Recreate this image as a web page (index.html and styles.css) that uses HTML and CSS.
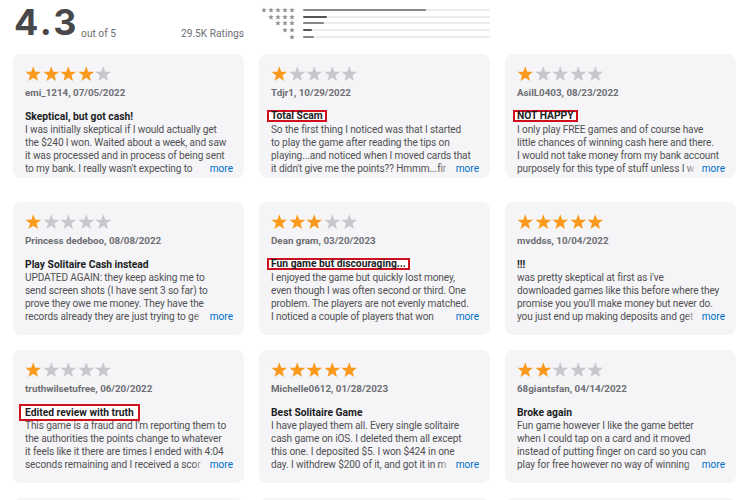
FILE: index.html
```html
<!DOCTYPE html>
<html>
<head>
  <meta charset="utf-8">
  <title>Ratings and Reviews</title>
  <link rel="stylesheet" href="styles.css">
</head>
<body>
  <svg class="defs" aria-hidden="true">
    <symbol id="star" viewBox="0 0 20 19">
      <polygon points="10,0 12.41,6.68 19.51,6.91 13.9,11.27 15.88,18.09 10,14.1 4.12,18.09 6.1,11.27 0.49,6.91 7.59,6.68"/>
    </symbol>
  </svg>

  <header class="summary">
    <div class="score">
      <span class="big">4.3</span>
      <span class="outof">out of 5</span>
      <span class="count">29.5K Ratings</span>
    </div>
    <div class="histogram">
      <div class="hrow"><span class="hstars"><svg><use href="#star"/></svg><svg><use href="#star"/></svg><svg><use href="#star"/></svg><svg><use href="#star"/></svg><svg><use href="#star"/></svg></span><span class="track"><span class="fill" style="width:66%"></span></span></div>
      <div class="hrow"><span class="hstars"><svg><use href="#star"/></svg><svg><use href="#star"/></svg><svg><use href="#star"/></svg><svg><use href="#star"/></svg></span><span class="track"><span class="fill dark" style="width:13%"></span></span></div>
      <div class="hrow"><span class="hstars"><svg><use href="#star"/></svg><svg><use href="#star"/></svg><svg><use href="#star"/></svg></span><span class="track"><span class="fill" style="width:11%"></span></span></div>
      <div class="hrow"><span class="hstars"><svg><use href="#star"/></svg><svg><use href="#star"/></svg></span><span class="track"><span class="fill dark" style="width:5%"></span></span></div>
      <div class="hrow"><span class="hstars"><svg><use href="#star"/></svg></span><span class="track"><span class="fill" style="width:6%"></span></span></div>
    </div>
  </header>

  <main class="reviews">
    <article class="card">
      <div class="stars"><svg class="on"><use href="#star"/></svg><svg class="on"><use href="#star"/></svg><svg class="on"><use href="#star"/></svg><svg class="on"><use href="#star"/></svg><svg><use href="#star"/></svg></div>
      <div class="who">emi_1214, 07/05/2022</div>
      <h3 class="title"><span>Skeptical, but got cash!</span></h3>
      <div class="body">
        <div class="line">I was initially skeptical if I would actually get</div>
        <div class="line">the $240 I won. Waited about a week, and saw</div>
        <div class="line">it was processed and in process of being sent</div>
        <div class="line last"><span class="clip">to my bank. I really wasn't expecting to</span><a class="more">more</a></div>
      </div>
    </article>

    <article class="card">
      <div class="stars"><svg class="on"><use href="#star"/></svg><svg><use href="#star"/></svg><svg><use href="#star"/></svg><svg><use href="#star"/></svg><svg><use href="#star"/></svg></div>
      <div class="who">Tdjr1, 10/29/2022</div>
      <h3 class="title"><span class="marked">Total Scam</span></h3>
      <div class="body">
        <div class="line">So the first thing I noticed was that I started</div>
        <div class="line">to play the game after reading the tips on</div>
        <div class="line">playing...and noticed when I moved cards that</div>
        <div class="line last"><span class="clip">it didn't give me the points?? Hmmm...fir</span><a class="more">more</a></div>
      </div>
    </article>

    <article class="card">
      <div class="stars"><svg class="on"><use href="#star"/></svg><svg><use href="#star"/></svg><svg><use href="#star"/></svg><svg><use href="#star"/></svg><svg><use href="#star"/></svg></div>
      <div class="who">AsilL0403, 08/23/2022</div>
      <h3 class="title"><span class="marked">NOT HAPPY</span></h3>
      <div class="body">
        <div class="line">I only play FREE games and of course have</div>
        <div class="line">little chances of winning cash here and there.</div>
        <div class="line">I would not take money from my bank account</div>
        <div class="line last"><span class="clip">purposely for this type of stuff unless I w</span><a class="more">more</a></div>
      </div>
    </article>

    <article class="card">
      <div class="stars"><svg class="on"><use href="#star"/></svg><svg><use href="#star"/></svg><svg><use href="#star"/></svg><svg><use href="#star"/></svg><svg><use href="#star"/></svg></div>
      <div class="who">Princess dedeboo, 08/08/2022</div>
      <h3 class="title"><span>Play Solitaire Cash instead</span></h3>
      <div class="body">
        <div class="line">UPDATED AGAIN: they keep asking me to</div>
        <div class="line">send screen shots (I have sent 3 so far) to</div>
        <div class="line">prove they owe me money. They have the</div>
        <div class="line last"><span class="clip">records already they are just trying to ge</span><a class="more">more</a></div>
      </div>
    </article>

    <article class="card">
      <div class="stars"><svg class="on"><use href="#star"/></svg><svg class="on"><use href="#star"/></svg><svg class="on"><use href="#star"/></svg><svg><use href="#star"/></svg><svg><use href="#star"/></svg></div>
      <div class="who">Dean gram, 03/20/2023</div>
      <h3 class="title"><span class="marked">Fun game but discouraging...</span></h3>
      <div class="body">
        <div class="line">I enjoyed the game but quickly lost money,</div>
        <div class="line">even though I was often second or third. One</div>
        <div class="line">problem. The players are not evenly matched.</div>
        <div class="line last"><span class="clip">I noticed a couple of players that won</span><a class="more">more</a></div>
      </div>
    </article>

    <article class="card">
      <div class="stars"><svg class="on"><use href="#star"/></svg><svg class="on"><use href="#star"/></svg><svg class="on"><use href="#star"/></svg><svg class="on"><use href="#star"/></svg><svg class="on"><use href="#star"/></svg></div>
      <div class="who">mvddss, 10/04/2022</div>
      <h3 class="title"><span>!!!</span></h3>
      <div class="body">
        <div class="line">was pretty skeptical at first as i've</div>
        <div class="line">downloaded games like this before where they</div>
        <div class="line">promise you you'll make money but never do.</div>
        <div class="line last"><span class="clip">you just end up making deposits and get</span><a class="more">more</a></div>
      </div>
    </article>

    <article class="card">
      <div class="stars"><svg class="on"><use href="#star"/></svg><svg><use href="#star"/></svg><svg><use href="#star"/></svg><svg><use href="#star"/></svg><svg><use href="#star"/></svg></div>
      <div class="who">truthwilsetufree, 06/20/2022</div>
      <h3 class="title"><span class="marked tall">Edited review with truth</span></h3>
      <div class="body">
        <div class="line">This game is a fraud and I'm reporting them to</div>
        <div class="line">the authorities the points change to whatever</div>
        <div class="line">it feels like it there are times I ended with 4:04</div>
        <div class="line last"><span class="clip">seconds remaining and I received a scor</span><a class="more">more</a></div>
      </div>
    </article>

    <article class="card">
      <div class="stars"><svg class="on"><use href="#star"/></svg><svg class="on"><use href="#star"/></svg><svg class="on"><use href="#star"/></svg><svg class="on"><use href="#star"/></svg><svg class="on"><use href="#star"/></svg></div>
      <div class="who">Michelle0612, 01/28/2023</div>
      <h3 class="title"><span>Best Solitaire Game</span></h3>
      <div class="body">
        <div class="line">I have played them all. Every single solitaire</div>
        <div class="line">cash game on iOS. I deleted them all except</div>
        <div class="line">this one. I deposited $5. I won $424 in one</div>
        <div class="line last"><span class="clip">day. I withdrew $200 of it, and got it in m</span><a class="more">more</a></div>
      </div>
    </article>

    <article class="card">
      <div class="stars"><svg class="on"><use href="#star"/></svg><svg class="on"><use href="#star"/></svg><svg><use href="#star"/></svg><svg><use href="#star"/></svg><svg><use href="#star"/></svg></div>
      <div class="who">68giantsfan, 04/14/2022</div>
      <h3 class="title"><span>Broke again</span></h3>
      <div class="body">
        <div class="line">Fun game however I like the game better</div>
        <div class="line">when I could tap on a card and it moved</div>
        <div class="line">instead of putting finger on card so you can</div>
        <div class="line last"><span class="clip">play for free however no way of winning</span><a class="more">more</a></div>
      </div>
    </article>

    <article class="card"></article>
    <article class="card"></article>
    <article class="card"></article>
  </main>
</body>
</html>
```

FILE: styles.css
```css
html, body { margin:0; background:#fff; }
body
{
  height:500px;
  overflow:hidden;
  font-family:Roboto, "Liberation Sans", sans-serif;
  color:#4a4a4d;
}
.defs { display:none; }

/* rating summary */
.summary
{
  display:grid;
  grid-template-columns:repeat(3, 231px);
  column-gap:15px;
  height:54px;
  padding:0 13px;
}
.score { display:flex; align-items:flex-end; height:38px; padding-top:2px; }
.score .big
{
  font-family:Inter, Roboto, sans-serif;
  font-size:36px;
  line-height:36px;
  font-weight:700;
  letter-spacing:2.5px;
  color:#48484a;
  margin-left:1px;
}
.score .outof, .score .count { font-size:10.2px; line-height:12px; color:#6e6e73; }
.score .outof { margin-left:2px; }
.score .count { margin-left:auto; }

.histogram { padding-top:7px; }
.hrow { display:flex; align-items:center; height:6.6px; }
.hstars { display:flex; justify-content:flex-end; gap:1px; width:36px; }
.hstars svg { width:6px; height:6px; fill:#8e8e93; }
.track { flex:1; height:2px; margin-left:8px; background:#ececf0; border-radius:1px; }
.fill { display:block; height:2px; background:#86868b; border-radius:1px; }
.fill.dark { background:#555558; }

/* review cards */
.reviews
{
  display:grid;
  grid-template-columns:repeat(3, 231px);
  grid-auto-rows:133px;
  gap:15px;
  padding:0 13px;
}
.card
{
  background:#f5f5f7;
  border-radius:8px;
  padding:12px 11px 0 12px;
  overflow:hidden;
}
.card:nth-child(-n+3) { align-self:start; height:124px; box-sizing:border-box; }

.stars { display:flex; gap:1px; height:16px; }
.stars svg { width:16.5px; height:16px; fill:#c7c7cc; }
.stars svg.on { fill:#fa9a1c; }

.who
{
  margin-top:4px;
  font-size:9.8px;
  line-height:14px;
  font-weight:700;
  color:#6e6e73;
}
.title
{
  display:flex;
  align-items:center;
  height:14px;
  margin:9px 0 0 0;
  font-size:10.3px;
  font-weight:700;
  color:#1d1d1f;
}
.title .marked
{
  border:2px solid #d0101e;
  background:#fff;
  padding:0 2px;
  margin-left:-4px;
  line-height:8px;
}
.title .marked.tall { line-height:13px; padding:0 4px; margin-left:-6px; }

.body { font-size:10.1px; line-height:13px; letter-spacing:-0.12px; color:#515154; }
.line { white-space:nowrap; overflow:hidden; }
.line.last { display:flex; }
.clip { flex:1; overflow:hidden; position:relative; }
.clip::after
{
  content:"";
  position:absolute;
  top:0; right:0; bottom:0;
  width:14px;
  background:linear-gradient(to right, rgba(245,245,247,0), #f5f5f7);
}
.more { margin-left:3px; color:#0070c9; cursor:pointer; letter-spacing:0; }
```
